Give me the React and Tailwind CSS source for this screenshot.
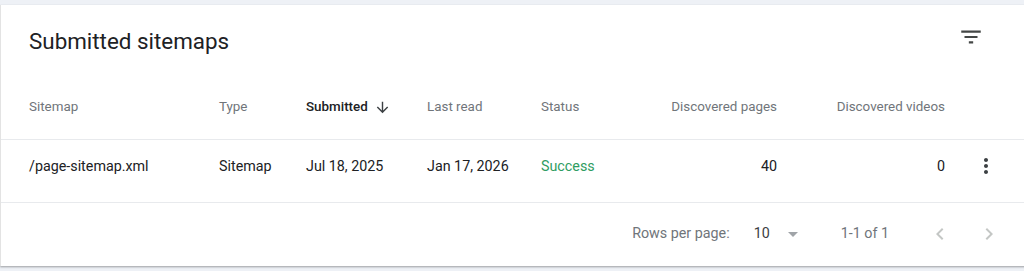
import React from 'react';

const headers = [
  { label: 'Sitemap' },
  { label: 'Type' },
  { label: 'Submitted', active: true },
  { label: 'Last read' },
  { label: 'Status' },
  { label: 'Discovered pages', right: true },
  { label: 'Discovered videos', right: true },
];

const rows = [
  {
    sitemap: '/page-sitemap.xml',
    type: 'Sitemap',
    submitted: 'Jul 18, 2025',
    lastRead: 'Jan 17, 2026',
    status: 'Success',
    pages: 40,
    videos: 0,
  },
];

const grid = 'grid grid-cols-[190px_87px_121px_114px_100px_136px_168px_1fr] pl-[28px]';

const App = () => {
  return (
    <div className="w-[1024px] h-[271px] overflow-hidden bg-[#eef1f6] pt-[5px] font-['Roboto',sans-serif]">
      <div className="w-[1030px] h-[261px] bg-white border-l border-[#e3e3e3] shadow-[0_1px_2px_rgba(0,0,0,0.35)]">
        {/* title */}
        <div className="h-[70px] flex pl-[28px] pr-[46px]">
          <h2 className="self-center mt-[2px] text-[22.4px] leading-[28px] text-[#202124]">Submitted sitemaps</h2>
          <button className="ml-auto mt-[19px] self-start text-[#444746]" aria-label="Filter">
            <svg width="26" height="26" viewBox="0 0 24 24" fill="currentColor"><path d="M10 18h4v-2h-4v2zM3 6v2h18V6H3zm3 7h12v-2H6v2z" /></svg>
          </button>
        </div>

        {/* header row */}
        <div className={`${grid} h-[65px] items-center pt-[1px] border-b border-[#e8eaed] text-[13.4px]`}>
          {headers.map((h) => (
            <div
              key={h.label}
              className={`flex items-center whitespace-nowrap ${h.right ? 'justify-end' : ''} ${h.active ? 'text-[#202124] font-medium' : 'text-[#70757a]'}`}
            >
              {h.label}
              {h.active && (
                <svg className="ml-[6px] text-[#3c4043]" width="17" height="17" viewBox="0 0 24 24" fill="currentColor"><path d="M20 12l-1.41-1.41L13 16.17V4h-2v12.17l-5.58-5.59L4 12l8 8 8-8z" /></svg>
              )}
            </div>
          ))}
          <div />
        </div>

        {/* data rows */}
        {rows.map((r) => (
          <div key={r.sitemap} className={`${grid} h-[63px] items-start pt-[14px] border-b border-[#e8eaed] text-[14.3px] text-[#202124]`}>
            <div className="leading-[24px]">{r.sitemap}</div>
            <div className="leading-[24px]">{r.type}</div>
            <div className="leading-[24px]">{r.submitted}</div>
            <div className="leading-[24px]">{r.lastRead}</div>
            <div className="leading-[24px] text-[#2f9d62]">{r.status}</div>
            <div className="leading-[24px] text-right">{r.pages}</div>
            <div className="leading-[24px] text-right">{r.videos}</div>
            <div className="pl-[29px]">
              <svg width="24" height="24" viewBox="0 0 24 24" fill="#3c4043"><path d="M12 8c1.1 0 2-.9 2-2s-.9-2-2-2-2 .9-2 2 .9 2 2 2zm0 2c-1.1 0-2 .9-2 2s.9 2 2 2 2-.9 2-2-.9-2-2-2zm0 6c-1.1 0-2 .9-2 2s.9 2 2 2 2-.9 2-2-.9-2-2-2z" /></svg>
            </div>
          </div>
        ))}

        {/* footer */}
        <div className="h-[62px] flex items-center justify-end pr-[29px] text-[14.3px] text-[#70757a]">
          <span>Rows per page:</span>
          <span className="ml-[24px] text-[#3c4043]">10</span>
          <svg className="ml-[11px]" width="24" height="24" viewBox="0 0 24 24" fill="#a0a4a8"><path d="M7 10l5 5 5-5z" /></svg>
          <span className="ml-[36px]">1-1 of 1</span>
          <svg className="ml-[39px]" width="24" height="24" viewBox="0 0 24 24" fill="#c4c7c5"><path d="M15.41 7.41L14 6l-6 6 6 6 1.41-1.41L10.83 12z" /></svg>
          <svg className="ml-[25px]" width="24" height="24" viewBox="0 0 24 24" fill="#c4c7c5"><path d="M10 6L8.59 7.41 13.17 12l-4.58 4.59L10 18l6-6z" /></svg>
        </div>
      </div>
    </div>
  );
};

export default App;
